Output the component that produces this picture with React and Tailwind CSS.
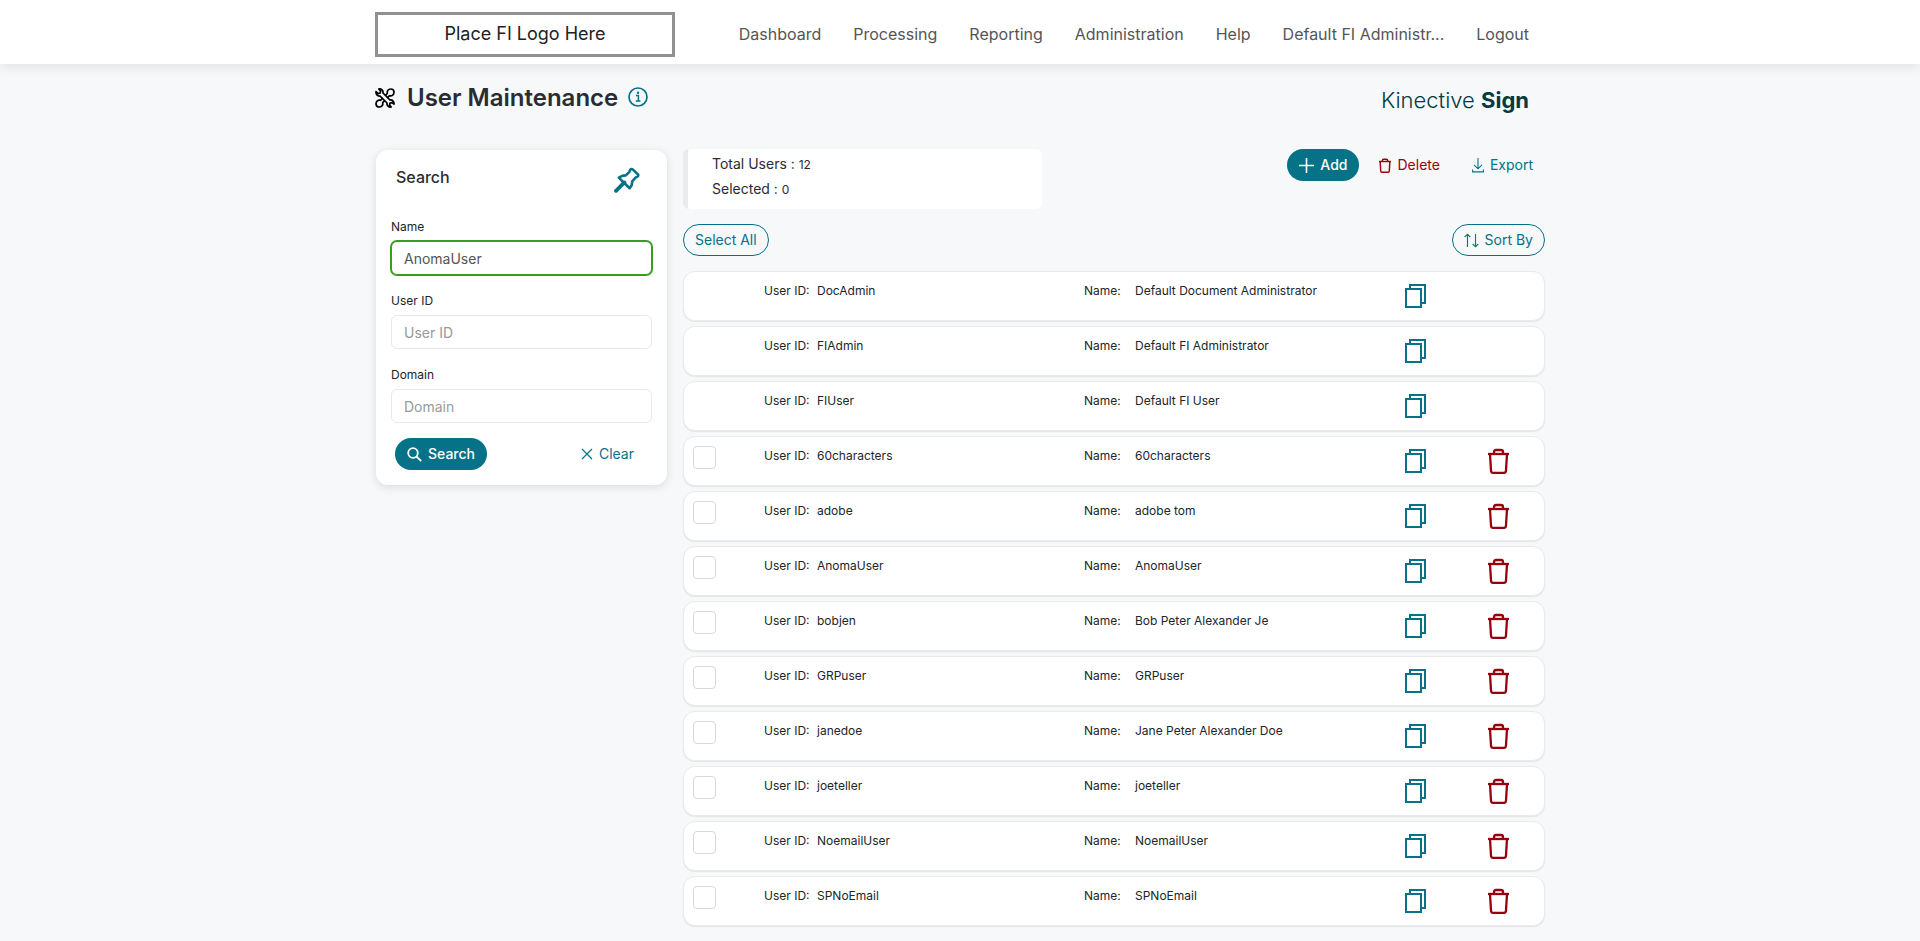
import { useState } from "react";

const navItems = ["Dashboard", "Processing", "Reporting", "Administration", "Help", "Default FI Administr...", "Logout"];

const users = [
  { id: "DocAdmin", name: "Default Document Administrator", locked: true },
  { id: "FIAdmin", name: "Default FI Administrator", locked: true },
  { id: "FIUser", name: "Default FI User", locked: true },
  { id: "60characters", name: "60characters" },
  { id: "adobe", name: "adobe tom" },
  { id: "AnomaUser", name: "AnomaUser" },
  { id: "bobjen", name: "Bob Peter Alexander Je" },
  { id: "GRPuser", name: "GRPuser" },
  { id: "janedoe", name: "Jane Peter Alexander Doe" },
  { id: "joeteller", name: "joeteller" },
  { id: "NoemailUser", name: "NoemailUser" },
  { id: "SPNoEmail", name: "SPNoEmail" },
];

function ToolsIcon() {
  return (
    <svg className="size-5" viewBox="0 0 20 20" fill="none" stroke="#000" strokeWidth="1.7" strokeLinejoin="round" aria-hidden="true">
      <path d="M1 3.6 3.2 5.6 5.2 5 5.6 3.2 3.8 1C6.4.6 8.4 2.500 8 5L15 12C17.500 11.600 19.400 13.800 19 16.200L17 14.600 15 15 14.600 17 16.200 19C13.800 19.400 11.600 17.500 12 15L5 8C2.500 8.400.6 6.200 1 3.600Z" />
      <path d="M7.800 10.200 5.400 12.300C3 11.700 1 13.400 1 15.700 1 17.600 2.500 19 4.300 19 6.600 19 8.300 17 7.700 14.600L9.800 12.200" />
      <path d="M10.200 7.800 12.300 5.400C11.700 3 13.400 1 15.700 1 17.600 1 19 2.500 19 4.300 19 6.600 17 8.300 14.600 7.700L12.200 9.800" />
    </svg>
  );
}

function InfoIcon() {
  return (
    <svg className="size-5" viewBox="0 0 20 20" fill="none" stroke="currentColor" aria-hidden="true">
      <circle cx="10" cy="10" r="9" strokeWidth="1.7" />
      <path d="M8 8.6h2.4v5M7.8 14h4.6" strokeWidth="1.5" />
      <circle cx="10" cy="5.8" r="1.2" fill="currentColor" stroke="none" />
    </svg>
  );
}

function PinIcon() {
  return (
    <svg className="size-[26px]" viewBox="0 0 26 26" fill="none" stroke="currentColor" aria-hidden="true">
      <path d="M16.200 2.800Q17.500 1.300 18.900 2.600L23.600 7Q25 8.400 23.600 9.600L21.800 10.400 18.200 14.400 17.800 18 15.600 21.200 4.800 10.600 8.200 8.800 11.800 8.400 15.400 4.800Z" strokeWidth="2.6" strokeLinejoin="round" />
      <path d="M10.400 15.400 2 23.800" strokeWidth="3.800" strokeLinecap="round" />
    </svg>
  );
}

function SearchIcon() {
  return (
    <svg className="size-[15px]" viewBox="0 0 15 15" fill="none" stroke="currentColor" strokeWidth="1.8" aria-hidden="true">
      <circle cx="6" cy="6" r="4.8" />
      <path d="m9.5 9.5 4.7 4.7" />
    </svg>
  );
}

function ClearIcon() {
  return (
    <svg className="size-3" viewBox="0 0 12 12" stroke="currentColor" strokeWidth="1.2" aria-hidden="true">
      <path d="m1 1 10 10M11 1 1 11" />
    </svg>
  );
}

function PlusIcon() {
  return (
    <svg className="size-[15px]" viewBox="0 0 15 15" stroke="currentColor" strokeWidth="1.6" aria-hidden="true">
      <path d="M7.5 0v15M0 7.5h15" />
    </svg>
  );
}

function DownloadIcon() {
  return (
    <svg className="h-[15px] w-3" viewBox="0 0 12 15" fill="none" stroke="currentColor" strokeWidth="1.1" aria-hidden="true">
      <path d="M6 0v10.5M2 6.8l4 4 4-4M.6 11.5v2.4h10.8v-2.4" />
    </svg>
  );
}

function SortIcon() {
  return (
    <svg className="size-[15px]" viewBox="0 0 15 15" fill="none" stroke="currentColor" strokeWidth="1.1" aria-hidden="true">
      <path d="M3.500 14V1.200M.7 4l2.800-2.800L6.300 4M11.500 1v12.800M8.700 11l2.800 2.800L14.300 11" />
    </svg>
  );
}

function CopyIcon() {
  return (
    <svg className="h-6 w-[21px]" viewBox="0 0 21 24" fill="none" stroke="currentColor" strokeWidth="2" aria-hidden="true">
      <path d="M1 5h15v18H1zM5 5V1h15v18h-4" />
    </svg>
  );
}

function TrashIcon({ className, strokeWidth = 2 }) {
  return (
    <svg className={className} viewBox="0 0 21 26" fill="none" stroke="currentColor" strokeWidth={strokeWidth} aria-hidden="true">
      <path d="M0 6h21" />
      <path d="M2 6 3 22.500Q3.100 24.800 5 24.800H16Q17.900 24.800 18 22.500L19 6" />
      <path d="M6 6V4Q6 2 8 2h5q2 0 2 2v2" />
    </svg>
  );
}

function Field({ id, label, ...props }) {
  return (
    <div className="mb-4">
      <label htmlFor={id} className="mb-1 block text-xs leading-5 text-[#212529]">{label}</label>
      <input
        id={id}
        type="text"
        className="block h-[34px] w-full rounded-md border border-[#e9e9e9] bg-white px-3 text-sm text-[#555] placeholder:text-[#999] focus:border-[#399c1f] focus:ring-1 focus:ring-[#399c1f] focus:outline-none"
        {...props}
      />
    </div>
  );
}

function UserRow({ user, checked, onToggle }) {
  return (
    <li className="grid h-[50px] grid-cols-[80px_32fr_29fr_83px_83px] rounded-xl border border-[#e9eaec] bg-white pr-1 text-xs text-[#212529] shadow-[0_1px_1px_#e4e5e7]">
      <div className="pt-[9px] pl-[9px]">
        {!user.locked && (
          <input
            type="checkbox"
            aria-label={"Select " + user.id}
            checked={checked}
            onChange={onToggle}
            className="block size-[23px] appearance-none rounded-sm border border-[#d8d6de] bg-white checked:bg-[#057287]"
          />
        )}
      </div>
      <div className="flex pt-[11px] leading-4">
        <span className="w-[53px]">User ID:</span>
        <span>{user.id}</span>
      </div>
      <div className="flex pt-[11px] leading-4">
        <span className="w-[51px]">Name:</span>
        <span>{user.name}</span>
      </div>
      <button type="button" aria-label={"Copy " + user.id} className="flex justify-center pt-3 text-[#057287]">
        <CopyIcon />
      </button>
      {!user.locked && (
        <button type="button" aria-label={"Delete " + user.id} className="flex justify-center pt-[11px] text-[#99000d]">
          <TrashIcon className="h-[26px] w-[21px]" strokeWidth={2.3} />
        </button>
      )}
    </li>
  );
}

export default function App() {
  const [name, setName] = useState("AnomaUser");
  const [userId, setUserId] = useState("");
  const [domain, setDomain] = useState("");
  const [selected, setSelected] = useState([]);

  const toggle = (id) => {
    setSelected((cur) => (cur.includes(id) ? cur.filter((x) => x !== id) : [...cur, id]));
  };

  const clear = () => {
    setName("");
    setUserId("");
    setDomain("");
  };

  return (
    <div className="min-h-screen bg-[#f6f8fa] font-['Inter',sans-serif] text-[#2b2b33]">
      <header className="bg-white shadow-[0_2px_12px_rgba(0,0,0,0.1)]">
        <div className="mx-auto flex h-16 max-w-[1170px] items-center justify-between pt-1">
          <div className="flex h-[45px] w-[300px] items-center justify-center border-3 border-[#919191] text-lg text-[#222]">
            Place FI Logo Here
          </div>
          <nav className="flex gap-8 pr-4 text-base text-[#555]">
            {navItems.map((item) => (
              <a key={item} href="#">{item}</a>
            ))}
          </nav>
        </div>
      </header>

      <main className="mx-auto max-w-[1170px] pb-4">
        <div className="flex h-[85px] items-start justify-between pt-4 pr-4">
          <div className="flex items-center">
            <ToolsIcon />
            <h1 className="ml-3 text-2xl leading-9 font-semibold">User Maintenance</h1>
            <button type="button" aria-label="Page information" className="ml-2.5 pb-0.5 text-[#057287]">
              <InfoIcon />
            </button>
          </div>
          <p className="pt-1 text-[22px] leading-8 font-light text-[#003b43]">
            Kinective <span className="font-bold">Sign</span>
          </p>
        </div>

        <div className="flex items-start gap-4">
          <form
            onSubmit={(e) => e.preventDefault()}
            className="mt-px ml-px w-[291px] shrink-0 rounded-xl bg-white px-[15px] pt-[15px] pb-[15px] shadow-[0_2px_10px_rgba(0,0,0,0.12)]"
          >
            <div className="mb-6 flex items-start justify-between pr-3 pl-[5px]">
              <h2 className="text-base font-medium">Search</h2>
              <button type="button" aria-label="Pin search panel" className="pt-0.5 text-[#057287]">
                <PinIcon />
              </button>
            </div>
            <Field id="name" label="Name" value={name} onChange={(e) => setName(e.target.value)} autoFocus />
            <Field id="userId" label="User ID" placeholder="User ID" value={userId} onChange={(e) => setUserId(e.target.value)} />
            <Field id="domain" label="Domain" placeholder="Domain" value={domain} onChange={(e) => setDomain(e.target.value)} />
            <div className="-mt-px flex justify-between pr-[18px] pl-1">
              <button type="submit" className="flex h-8 items-center gap-1.5 rounded-full bg-[#057287] px-3 text-sm font-medium text-white">
                <SearchIcon />
                Search
              </button>
              <button type="button" onClick={clear} className="flex h-8 items-center gap-1.5 text-sm text-[#057287]">
                <ClearIcon />
                Clear
              </button>
            </div>
          </form>

          <section className="min-w-0 flex-1">
            <div className="flex items-start justify-between">
              <div className="h-[60px] w-[359px] rounded-md border-l-5 border-[#ebebeb] bg-white pt-0.5 pl-6 text-sm leading-[25px]">
                <p>Total Users : <span className="text-xs">{users.length}</span></p>
                <p>Selected : <span className="text-xs">{selected.length}</span></p>
              </div>
              <div className="flex text-sm">
                <button type="button" className="flex h-8 items-center gap-1.5 rounded-full bg-[#057287] px-3 font-medium text-white">
                  <PlusIcon />
                  Add
                </button>
                <button type="button" className="ml-5 flex h-8 items-center gap-1.5 text-[#99000d]">
                  <TrashIcon className="h-[15px] w-3" strokeWidth={2.5} />
                  Delete
                </button>
                <button type="button" className="mr-3 ml-8 flex h-8 items-center gap-1.5 text-[#057287]">
                  <DownloadIcon />
                  Export
                </button>
              </div>
            </div>

            <div className="mt-[15px] flex justify-between text-sm text-[#057287]">
              <button
                type="button"
                onClick={() => setSelected(users.filter((u) => !u.locked).map((u) => u.id))}
                className="h-8 rounded-full border border-[#057287] px-[11px]"
              >
                Select All
              </button>
              <button type="button" className="flex h-8 items-center gap-1.5 rounded-full border border-[#057287] px-[11px]">
                <SortIcon />
                Sort By
              </button>
            </div>

            <ul className="mt-[15px] flex flex-col gap-[5px]">
              {users.map((user) => (
                <UserRow key={user.id} user={user} checked={selected.includes(user.id)} onToggle={() => toggle(user.id)} />
              ))}
            </ul>
          </section>
        </div>
      </main>
    </div>
  );
}
